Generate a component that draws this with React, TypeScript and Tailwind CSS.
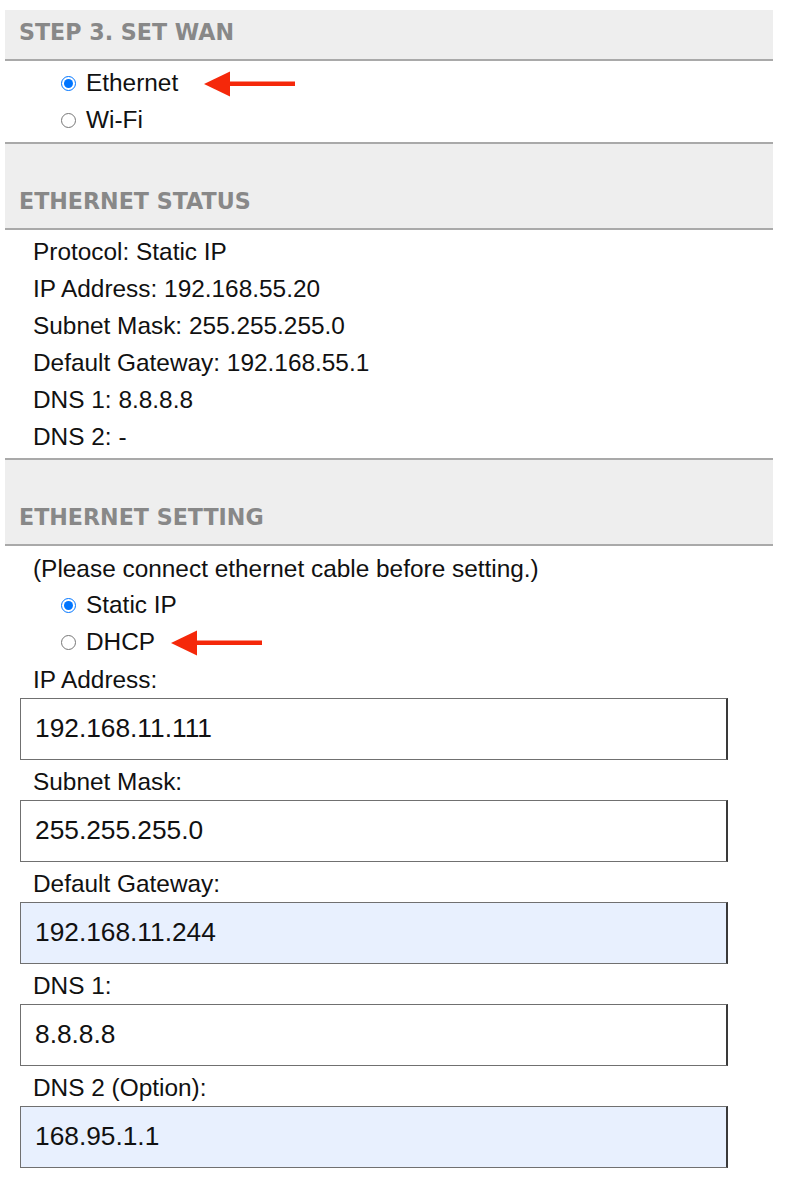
const STATUS = [
  "Protocol: Static IP",
  "IP Address: 192.168.55.20",
  "Subnet Mask: 255.255.255.0",
  "Default Gateway: 192.168.55.1",
  "DNS 1: 8.8.8.8",
  "DNS 2: -",
];

const FIELDS = [
  { label: "IP Address:", value: "192.168.11.111", filled: false },
  { label: "Subnet Mask:", value: "255.255.255.0", filled: false },
  { label: "Default Gateway:", value: "192.168.11.244", filled: true },
  { label: "DNS 1:", value: "8.8.8.8", filled: false },
  { label: "DNS 2 (Option):", value: "168.95.1.1", filled: true },
];

function Arrow() {
  return (
    <svg width="92" height="26" viewBox="0 0 92 26" className="shrink-0">
      <path d="M0 13 L26 0.5 L26 25.5 Z" fill="#f5280a" />
      <rect x="24" y="10.5" width="67" height="4.5" fill="#f5280a" />
    </svg>
  );
}

function Radio({ label, checked, arrow }: { label: string; checked?: boolean; arrow?: number }) {
  return (
    <div className="flex items-center h-[37px]">
      <input
        type="radio"
        checked={!!checked}
        readOnly
        className="w-[15px] h-[15px] m-0 accent-[#0075ff]"
      />
      <span className="ml-[10px]">{label}</span>
      {arrow !== undefined && (
        <span className={arrow === 1 ? "ml-[26px] flex" : "ml-[16px] flex"}>
          <Arrow />
        </span>
      )}
    </div>
  );
}

function Header({ title, first }: { title: string; first?: boolean }) {
  return (
    <div
      className={
        first
          ? "bg-[#eeeeee] border-b-2 border-[#a9a9a9] pl-[14px] pt-[8px] h-[51px]"
          : "bg-[#eeeeee] border-y-2 border-[#a9a9a9] pl-[14px] pt-[43px] h-[88px]"
      }
    >
      <div className="font-['DejaVu_Sans',sans-serif] font-bold text-[22.2px] leading-[28px] text-[#888888]">
        {title}
      </div>
    </div>
  );
}

export default function App() {
  return (
    <div className="bg-white min-h-[1178px] pt-[10px] pl-[5px] font-['Liberation_Sans',Arial,sans-serif] text-[24.4px] text-[#111]">
      <div className="w-[768px]">
        <Header title="STEP 3. SET WAN" first />
        <div className="pl-[56px] pt-[4px] pb-[3px]">
          <Radio label="Ethernet" checked arrow={1} />
          <Radio label="Wi-Fi" />
        </div>

        <Header title="ETHERNET STATUS" />
        <div className="pl-[28px] pt-[3px] pb-[3px] leading-[37px]">
          {STATUS.map((s) => (
            <div key={s}>{s}</div>
          ))}
        </div>

        <Header title="ETHERNET SETTING" />
        <div className="pt-[4px]">
          <div className="pl-[28px] leading-[37px]">(Please connect ethernet cable before setting.)</div>
          <div className="pl-[56px]">
            <Radio label="Static IP" checked />
            <Radio label="DHCP" arrow={2} />
          </div>
          <div className="pl-[15px] flex flex-col">
            {FIELDS.map((f, i) => (
              <div key={f.label} className={i === 0 ? "flex flex-col" : "flex flex-col pt-[3px]"}>
                <div className="pl-[13px] leading-[37px]">{f.label}</div>
                <div
                  className={
                    (f.filled ? "bg-[#e8f0fe]" : "bg-white") +
                    " w-[708px] h-[62px] border border-[#707070] border-r-2 border-r-[#3a3a3a] flex items-center pl-[14px] text-[26.3px] text-[#111]"
                  }
                >
                  {f.value}
                </div>
              </div>
            ))}
          </div>
        </div>
      </div>
    </div>
  );
}
